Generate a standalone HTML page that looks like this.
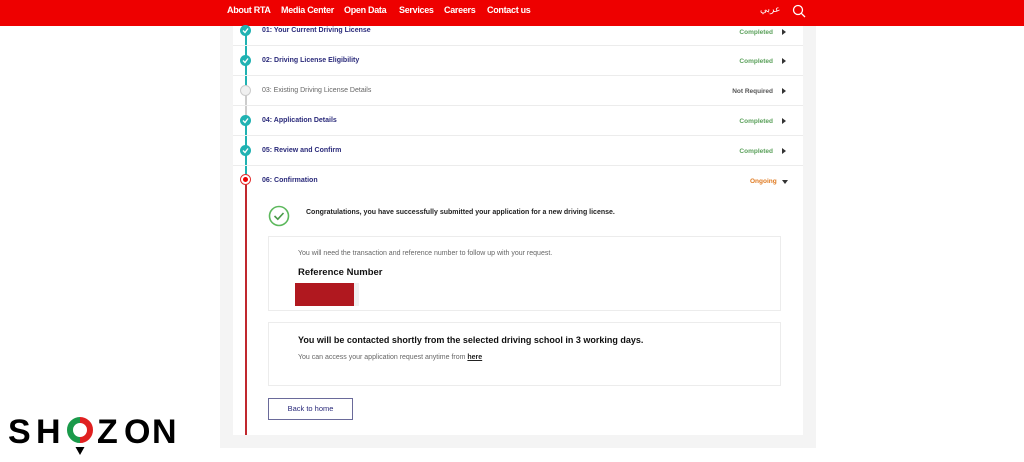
<!DOCTYPE html>
<html><head><meta charset="utf-8"><style>
*{margin:0;padding:0;box-sizing:border-box}
body{width:1024px;height:462px;background:#fff;font-family:"Liberation Sans","DejaVu Sans",sans-serif;position:relative;overflow:hidden}
.hdr{position:absolute;left:0;top:0;width:1024px;height:26px;background:#ee0000;color:#fff;font-weight:bold;font-size:9px;letter-spacing:-0.3px}
.hdr span{position:absolute;top:5px}
.panel{position:absolute;left:220px;top:26px;width:596px;height:422px;background:#f4f4f4}
.card{position:absolute;left:233px;top:26px;width:570px;height:409px;background:#fff}
.row{position:absolute;left:233px;width:570px;height:30px;border-bottom:1px solid #ececec}
.row .t{position:absolute;left:29px;top:0;font-size:7px;color:#2a2a7a;font-weight:bold}
.row .s{position:absolute;right:30px;font-size:6.5px;color:#5aa05a;font-weight:bold}
.row .a{position:absolute;right:17px;width:0;height:0;border-left:4px solid #333;border-top:3px solid transparent;border-bottom:3px solid transparent}
.dot{position:absolute;left:240px;width:11px;height:11px;border-radius:50%;background:#20b2b2}
.dot svg{position:absolute;left:2px;top:2px}
.line{position:absolute;left:245px;width:1.5px}
.box{position:absolute;left:268px;width:513px;border:1px solid #ececec;background:#fff}
.lg{position:absolute;top:413px;font-size:34px;font-weight:bold;color:#000;line-height:38px}
</style></head><body>
<div class="hdr">
<span style="left:227px">About RTA</span><span style="left:281px">Media Center</span><span style="left:344px">Open Data</span><span style="left:399px">Services</span><span style="left:444px">Careers</span><span style="left:487px">Contact us</span>
<span style="left:760px;font-weight:normal;font-family:'DejaVu Sans',sans-serif">عربي</span>
<svg style="position:absolute;left:792px;top:4px" width="14" height="14" viewBox="0 0 14 14"><circle cx="6" cy="6" r="4.5" stroke="#fff" stroke-width="1.3" fill="none"/><line x1="9.3" y1="9.3" x2="13" y2="13" stroke="#fff" stroke-width="1.3"/></svg>
</div>
<div class="panel"></div>
<div class="card"></div>
<div class="line" style="top:26px;height:60px;background:#20b2b2"></div>
<div class="line" style="top:86px;height:30px;background:#ccc"></div>
<div class="line" style="top:116px;height:62px;background:#20b2b2"></div>
<div class="line" style="top:178px;height:257px;background:#c0282e"></div>

<div class="row" style="top:26px;height:20px"><div class="t" style="top:1px">01: Your Current Driving License</div><div class="s" style="top:3px">Completed</div><div class="a" style="top:3px"></div></div>
<div class="row" style="top:46px"><div class="t" style="top:11px">02: Driving License Eligibility</div><div class="s" style="top:12px">Completed</div><div class="a" style="top:12px"></div></div>
<div class="row" style="top:76px"><div class="t" style="top:11px;color:#666;font-weight:normal">03: Existing Driving License Details</div><div class="s" style="top:12px;color:#555">Not Required</div><div class="a" style="top:12px"></div></div>
<div class="row" style="top:106px"><div class="t" style="top:11px">04: Application Details</div><div class="s" style="top:12px">Completed</div><div class="a" style="top:12px"></div></div>
<div class="row" style="top:136px"><div class="t" style="top:11px">05: Review and Confirm</div><div class="s" style="top:12px">Completed</div><div class="a" style="top:12px"></div></div>
<div style="position:absolute;left:262px;top:177px;font-size:7px;color:#2a2a7a;font-weight:bold">06: Confirmation</div>
<div style="position:absolute;left:750px;top:178px;font-size:6.5px;color:#e07a20;font-weight:bold">Ongoing</div>
<div style="position:absolute;left:782px;top:180px;border-top:4px solid #333;border-left:3px solid transparent;border-right:3px solid transparent"></div>

<div class="dot" style="top:25px"><svg width="7" height="7" viewBox="0 0 7 7"><path d="M1 3.5L3 5.5L6 1.5" stroke="#fff" stroke-width="1.3" fill="none"/></svg></div>
<div class="dot" style="top:55px"><svg width="7" height="7" viewBox="0 0 7 7"><path d="M1 3.5L3 5.5L6 1.5" stroke="#fff" stroke-width="1.3" fill="none"/></svg></div>
<div class="dot" style="top:85px;background:#f0f0f0;border:1px solid #ccc"></div>
<div class="dot" style="top:115px"><svg width="7" height="7" viewBox="0 0 7 7"><path d="M1 3.5L3 5.5L6 1.5" stroke="#fff" stroke-width="1.3" fill="none"/></svg></div>
<div class="dot" style="top:145px"><svg width="7" height="7" viewBox="0 0 7 7"><path d="M1 3.5L3 5.5L6 1.5" stroke="#fff" stroke-width="1.3" fill="none"/></svg></div>
<div class="dot" style="top:174px;background:#fff;border:1px solid #e03030"><div style="position:absolute;left:2px;top:2px;width:5px;height:5px;border-radius:50%;background:#e00"></div></div>

<svg style="position:absolute;left:268px;top:205px" width="22" height="22" viewBox="0 0 22 22"><circle cx="11" cy="11" r="9.5" stroke="#5cb85c" stroke-width="1.6" fill="none"/><path d="M6.5 11L9.8 14.2L15.5 8" stroke="#4a9a4a" stroke-width="1.6" fill="none"/></svg>
<div style="position:absolute;left:306px;top:209px;font-size:7px;font-weight:bold;color:#222">Congratulations, you have successfully submitted your application for a new driving license.</div>

<div class="box" style="top:236px;height:75px">
<div style="position:absolute;left:29px;top:13px;font-size:7px;color:#666">You will need the transaction and reference number to follow up with your request.</div>
<div style="position:absolute;left:29px;top:30px;font-size:9.5px;font-weight:bold;color:#111">Reference Number</div>
<div style="position:absolute;left:26px;top:46px;width:64px;height:23px;background:#f0f0f0"></div>
<div style="position:absolute;left:26px;top:46px;width:59px;height:23px;background:#b0181f"></div>
</div>
<div class="box" style="top:322px;height:64px">
<div style="position:absolute;left:29px;top:12px;font-size:9px;font-weight:bold;color:#111">You will be contacted shortly from the selected driving school in 3 working days.</div>
<div style="position:absolute;left:29px;top:31px;font-size:7px;color:#666">You can access your application request anytime from <b style="color:#222;text-decoration:underline">here</b></div>
</div>
<div style="position:absolute;left:268px;top:398px;width:85px;height:22px;border:1px solid #6a6a9a;font-size:7.5px;color:#2a2a7a;text-align:center;line-height:20px">Back to home</div>

<div class="lg" style="left:8px">S</div>
<div class="lg" style="left:36px">H</div>
<div class="lg" style="left:97px">Z</div>
<div class="lg" style="left:124px">O</div>
<div class="lg" style="left:152px">N</div>
<svg style="position:absolute;left:66px;top:417px" width="28" height="42" viewBox="0 0 28 42"><path d="M14 3A10 10 0 0 0 14 23" stroke="#1a9a4a" stroke-width="6" fill="none"/><path d="M14 3A10 10 0 0 1 14 23" stroke="#e02020" stroke-width="6" fill="none"/><path d="M9.5 30L18.5 30L14 38Z" fill="#000"/></svg>
</body></html>
